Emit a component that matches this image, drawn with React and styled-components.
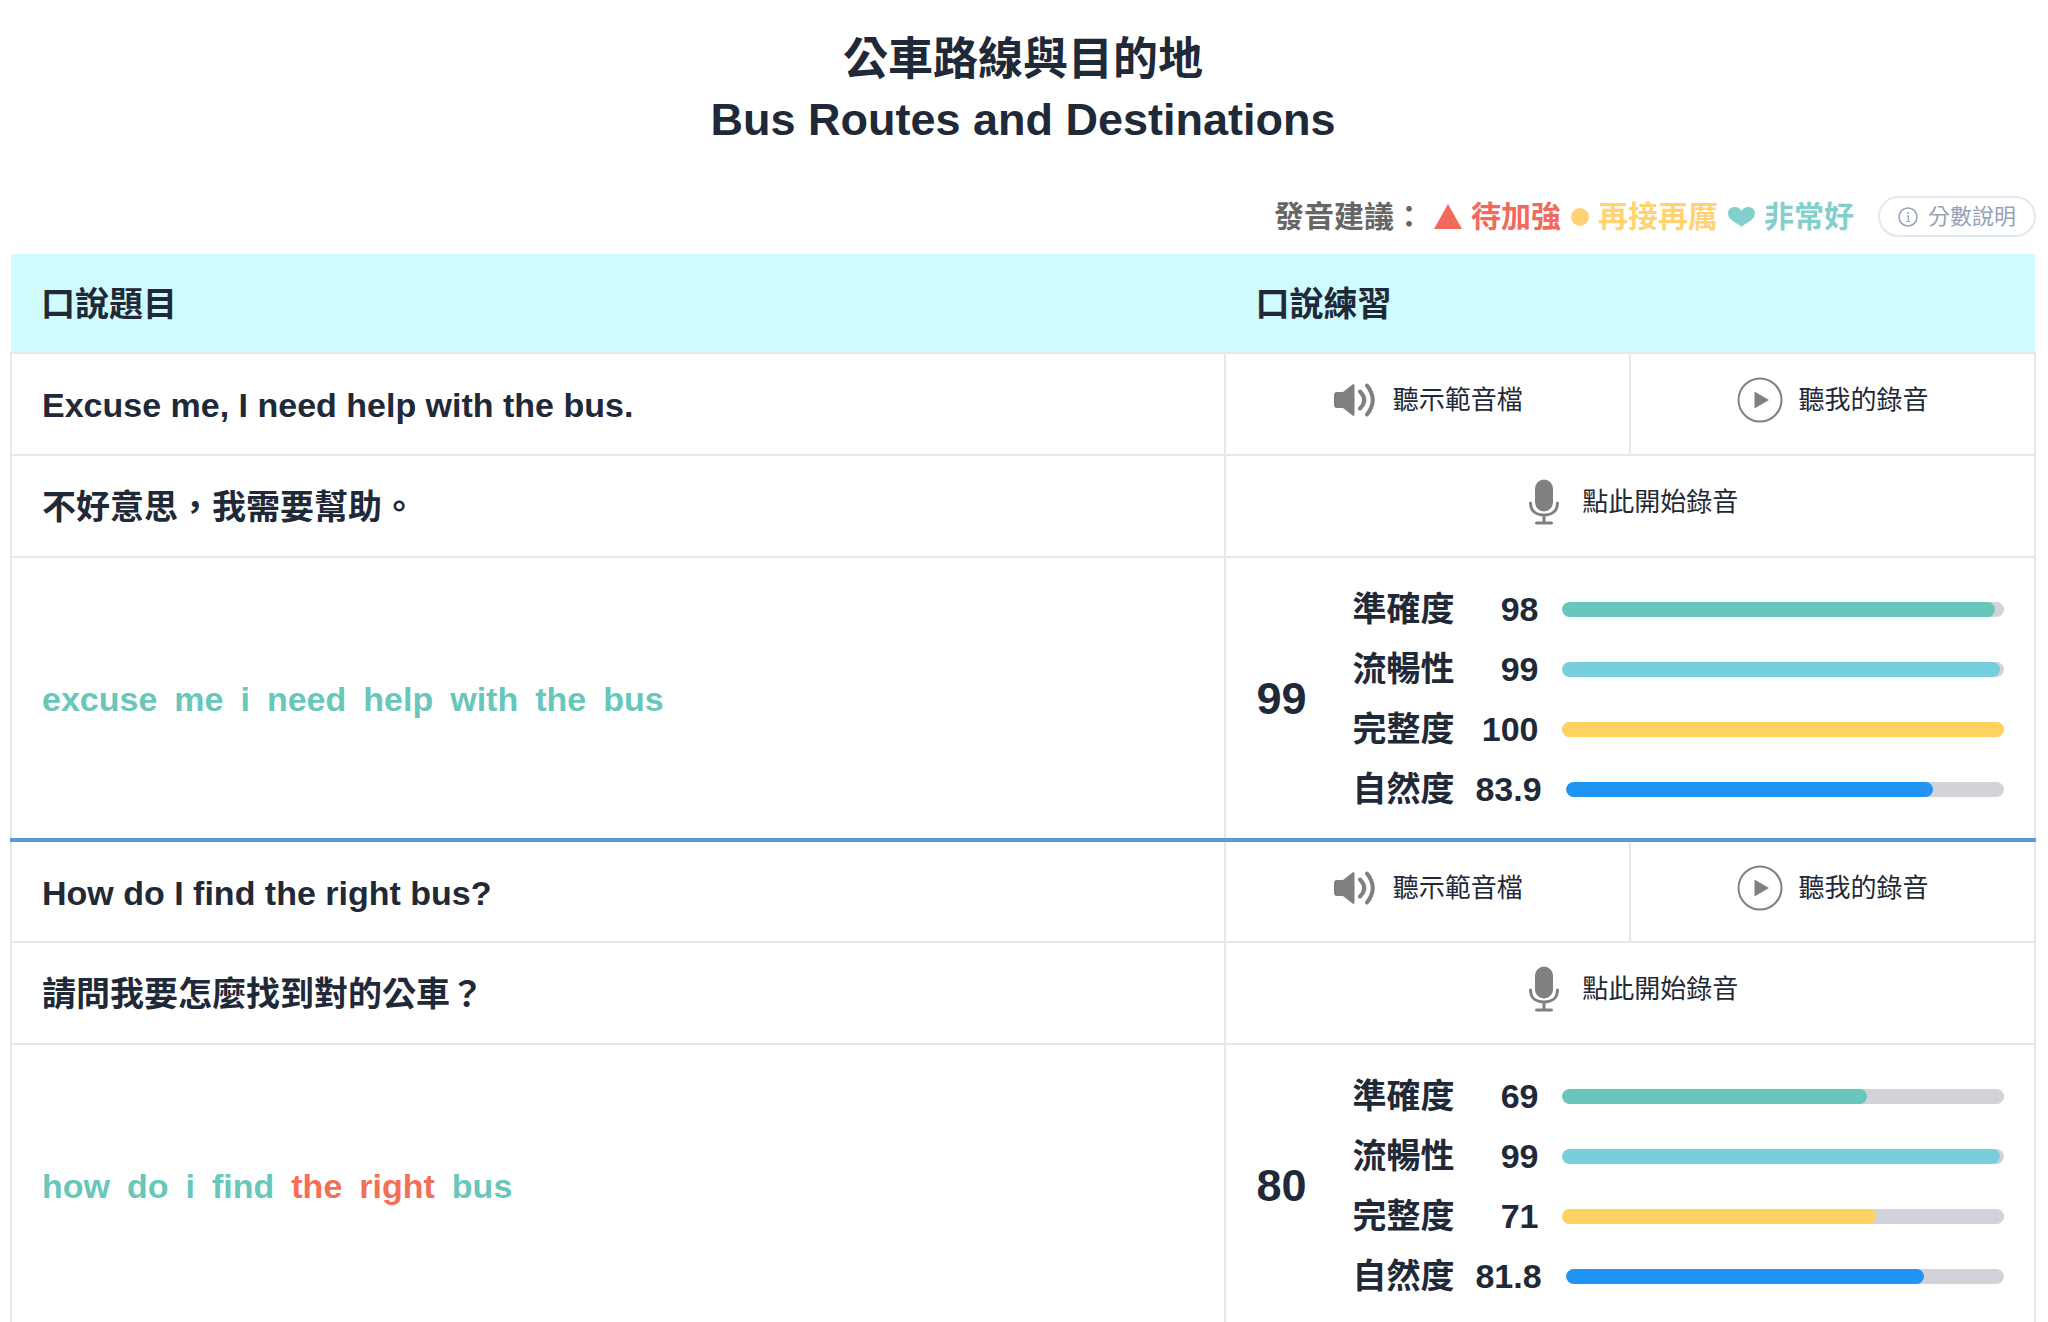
/* eslint-disable react/prop-types */
import styled, { createGlobalStyle } from "styled-components";

const SCORE_COLORS = ["#68c7ba", "#77cedd", "#ffd15f", "#2094f3"];
const SCORE_LABELS = ["準確度", "流暢性", "完整度", "自然度"];

const questions = [
  {
    id: 1,
    english: "Excuse me, I need help with the bus.",
    chinese: "不好意思，我需要幫助。",
    words: ["excuse", "me", "i", "need", "help", "with", "the", "bus"],
    weakWords: [],
    total: 99,
    scores: [98, 99, 100, 83.9],
  },
  {
    id: 2,
    english: "How do I find the right bus?",
    chinese: "請問我要怎麼找到對的公車？",
    words: ["how", "do", "i", "find", "the", "right", "bus"],
    weakWords: ["the", "right"],
    total: 80,
    scores: [69, 99, 71, 81.8],
  },
];

const SpeakerIcon = () => (
  <svg width="44" height="46" viewBox="0 0 44 46" aria-hidden="true">
    <path
      d="M4 15H10L19.5 7.6Q21.5 6.2 21.5 8.8V37.2Q21.5 39.8 19.5 38.4L10 31H4Q1 31 1 28V18Q1 15 4 15Z"
      fill="#808080"
    />
    <path
      d="M27 14.5Q35.500 23 27 31.500M34 8.500Q45.500 23 34 37.500"
      fill="none"
      stroke="#808080"
      strokeWidth="4"
      strokeLinecap="round"
    />
  </svg>
);

const PlayIcon = () => (
  <svg width="46" height="46" viewBox="0 0 46 46" aria-hidden="true">
    <circle cx="23" cy="23" r="21.5" fill="none" stroke="#808080" strokeWidth="2" />
    <path d="M17.500 14.500L32 23L17.500 31.500Z" fill="#808080" />
  </svg>
);

const MicIcon = () => (
  <svg width="44" height="46" viewBox="0 0 44 46" aria-hidden="true">
    <rect x="13" y="0.5" width="18" height="32" rx="9" fill="#808080" />
    <path
      d="M8.500 24C8.500 32.500 14.500 36 22 36S35.500 32.500 35.500 24M22 36V44M14.500 44H29.500"
      fill="none"
      stroke="#808080"
      strokeWidth="3"
      strokeLinecap="round"
    />
  </svg>
);

const TriangleIcon = () => (
  <svg width="28" height="26" viewBox="0 0 28 26" aria-hidden="true">
    <path d="M14 0L28 25H0Z" fill="#f26a5a" />
  </svg>
);

const CircleIcon = () => (
  <svg width="18" height="18" viewBox="0 0 18 18" aria-hidden="true">
    <circle cx="9" cy="9" r="9" fill="#ffd373" />
  </svg>
);

const HeartIcon = () => (
  <svg width="27" height="20" viewBox="0 0 27 20" aria-hidden="true">
    <path
      d="M13.500 20C11.500 17 0 13.500 0 6.500C0 2.500 3 0 6.800 0C10 0 12.500 1.500 13.500 4.500C14.500 1.500 17 0 20.200 0C24 0 27 2.500 27 6.500C27 13.500 15.500 17 13.500 20Z"
      fill="#83cfcc"
    />
  </svg>
);

const InfoIcon = () => (
  <svg width="20" height="20" viewBox="0 0 20 20" fill="none" stroke="#94a3b8" aria-hidden="true">
    <circle cx="10" cy="10" r="9" strokeWidth="1.5" />
    <path d="M8.500 9H10.300V14.500M8.300 14.500H12" strokeWidth="1.200" />
    <circle cx="10" cy="6" r="1" fill="#94a3b8" stroke="none" />
  </svg>
);

function ScoreBoard({ total, scores }) {
  return (
    <Board>
      <Total>{total}</Total>
      <ScoreList>
        {scores.map((score, index) => (
          <ScoreItem key={SCORE_LABELS[index]}>
            <span>{SCORE_LABELS[index]}</span>
            <ScoreValue>{score}</ScoreValue>
            <Track>
              <Bar $color={SCORE_COLORS[index]} style={{ width: `${score}%` }} />
            </Track>
          </ScoreItem>
        ))}
      </ScoreList>
    </Board>
  );
}

function Question({ question }) {
  return (
    <tbody>
      <tr>
        <Cell>{question.english}</Cell>
        <ActionCell>
          <ActionButton type="button">
            <SpeakerIcon />
            聽示範音檔
          </ActionButton>
        </ActionCell>
        <ActionCell>
          <ActionButton type="button">
            <PlayIcon />
            聽我的錄音
          </ActionButton>
        </ActionCell>
      </tr>
      <tr>
        <Cell>{question.chinese}</Cell>
        <ActionCell colSpan={2}>
          <ActionButton type="button">
            <MicIcon />
            點此開始錄音
          </ActionButton>
        </ActionCell>
      </tr>
      <ResultRow>
        <Cell>
          <Words>
            {question.words.map((word) => (
              <Word key={word} $weak={question.weakWords.includes(word)}>
                {word}
              </Word>
            ))}
          </Words>
        </Cell>
        <Cell colSpan={2}>
          <ScoreBoard total={question.total} scores={question.scores} />
        </Cell>
      </ResultRow>
    </tbody>
  );
}

function App() {
  return (
    <>
      <GlobalStyle />
      <Container>
        <Title>
          公車路線與目的地
          <br />
          Bus Routes and Destinations
        </Title>
        <Legend>
          <LegendItem $color="#666666">發音建議：</LegendItem>
          <LegendItem $color="#f26a5a">
            <TriangleIcon />
            待加強
          </LegendItem>
          <LegendItem $color="#ffd373">
            <CircleIcon />
            再接再厲
          </LegendItem>
          <LegendItem $color="#83cfcc">
            <HeartIcon />
            非常好
          </LegendItem>
          <InfoButton type="button">
            <InfoIcon />
            分數說明
          </InfoButton>
        </Legend>
        <Table>
          <colgroup>
            <Column $width="60%" />
            <Column $width="20%" />
            <Column $width="20%" />
          </colgroup>
          <thead>
            <tr>
              <HeadCell scope="col">口說題目</HeadCell>
              <HeadCell scope="col" colSpan={2}>
                口說練習
              </HeadCell>
            </tr>
          </thead>
          {questions.map((question) => (
            <Question key={question.id} question={question} />
          ))}
        </Table>
      </Container>
    </>
  );
}

const GlobalStyle = createGlobalStyle`
  * {
    box-sizing: border-box;
  }
  body {
    margin: 0;
    background: #ffffff;
    color: #1f2937;
    font-family: "Liberation Sans", "Noto Sans CJK TC", sans-serif;
  }
  button {
    font-family: inherit;
    cursor: pointer;
  }
  svg {
    display: block;
    flex-shrink: 0;
  }
`;

const Container = styled.main`
  padding: 30px 12px 0 10px;
`;

const Title = styled.h1`
  margin: 0 0 46px;
  font-size: 45px;
  line-height: 60px;
  font-weight: 700;
  text-align: center;
`;

const Legend = styled.div`
  display: flex;
  justify-content: flex-end;
  align-items: center;
  gap: 10px;
  margin-bottom: 17px;
`;

const LegendItem = styled.span`
  display: flex;
  align-items: center;
  gap: 9px;
  font-size: 30px;
  line-height: 40px;
  font-weight: 700;
  color: ${({ $color }) => $color};
`;

const InfoButton = styled.button`
  display: flex;
  align-items: center;
  gap: 10px;
  height: 41px;
  margin-left: 14px;
  padding: 0 18px;
  border: 2px solid #e2e8f0;
  border-radius: 21px;
  background: #ffffff;
  color: #94a3b8;
  font-size: 22px;
  line-height: 30px;
`;

const Table = styled.table`
  width: 100%;
  table-layout: fixed;
  border-collapse: collapse;
`;

const Column = styled.col`
  width: ${({ $width }) => $width};
`;

const HeadCell = styled.th`
  height: 99px;
  padding: 2px 30px 0;
  background: #cffafe;
  font-size: 34px;
  line-height: 48px;
  font-weight: 700;
  text-align: left;
`;

const Cell = styled.td`
  height: 102px;
  padding: 2px 30px 0;
  border: 2px solid #e5e7eb;
  font-size: 34px;
  line-height: 48px;
  font-weight: 700;
  vertical-align: middle;
`;

const ActionCell = styled(Cell)`
  padding: 0 0 8px;
`;

const ActionButton = styled.button`
  display: flex;
  align-items: center;
  justify-content: center;
  gap: 16px;
  width: 100%;
  padding: 0;
  border: 0;
  background: none;
  color: #1f2937;
  font-size: 26px;
  line-height: 40px;
`;

const ResultRow = styled.tr`
  ${Cell} {
    border-bottom: 4px solid #5c99da;
  }
`;

const Words = styled.div`
  display: flex;
  flex-wrap: wrap;
  gap: 17px;
`;

const Word = styled.span`
  color: ${({ $weak }) => ($weak ? "#f56e56" : "#68c7ba")};
`;

const Board = styled.div`
  display: flex;
  align-items: center;
  gap: 46px;
  padding: 19px 0;
`;

const Total = styled.span`
  font-size: 45px;
  line-height: 60px;
`;

const ScoreList = styled.div`
  flex: 1;
`;

const ScoreItem = styled.div`
  display: flex;
  align-items: center;
  height: 60px;
`;

const ScoreValue = styled.span`
  min-width: 63px;
  margin: 0 24px 0 21px;
  text-align: right;
`;

const Track = styled.div`
  flex: 1;
  height: 15px;
  border-radius: 8px;
  background: #d1d3d8;
  overflow: hidden;
`;

const Bar = styled.div`
  height: 100%;
  border-radius: 8px;
  background: ${({ $color }) => $color};
`;

export default App;
